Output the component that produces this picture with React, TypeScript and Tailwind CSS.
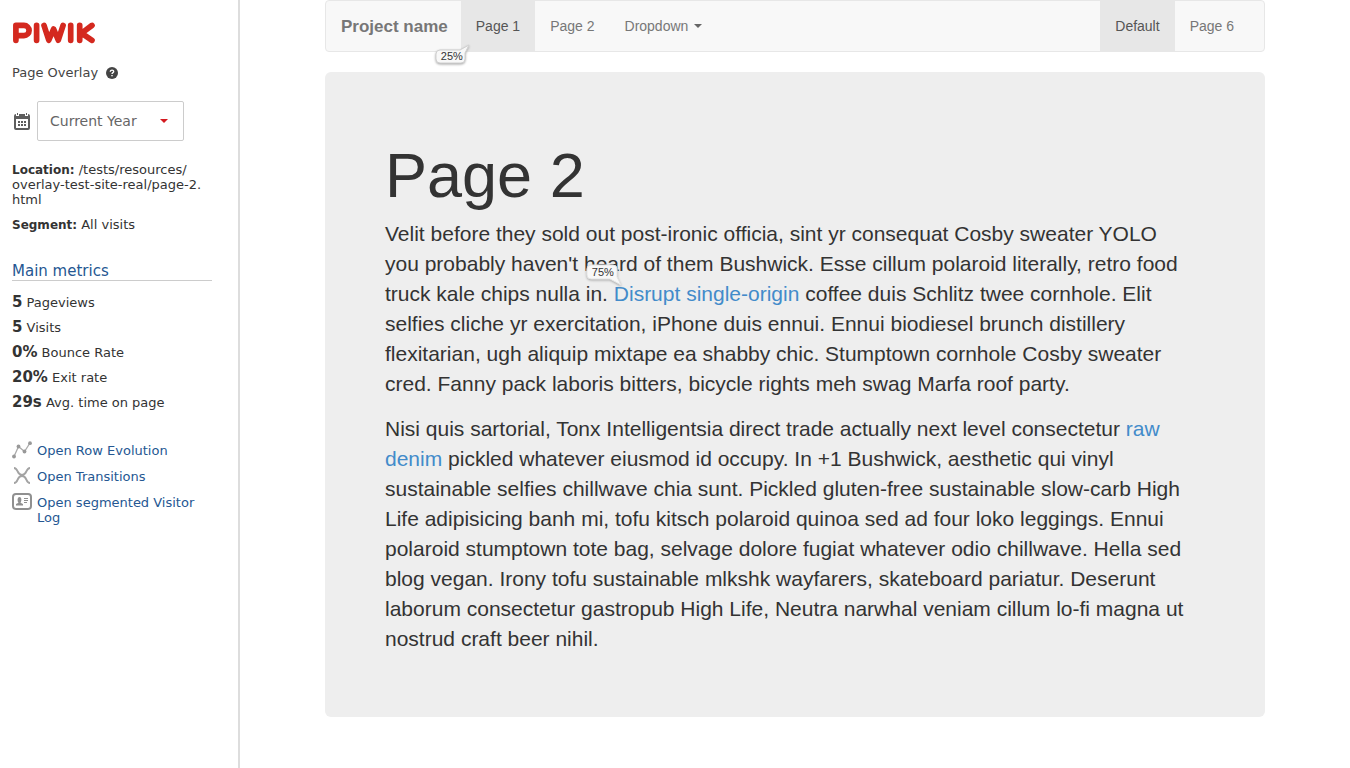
import React from "react";

const metrics = [
  ["5", "Pageviews"],
  ["5", "Visits"],
  ["0%", "Bounce Rate"],
  ["20%", "Exit rate"],
  ["29s", "Avg. time on page"],
];

function Logo() {
  return (
    <svg viewBox="0 0 84 22" className="h-[22px] w-[84px]" fill="none" stroke="#d4291f" strokeWidth="5.700" strokeLinecap="round" strokeLinejoin="round" role="img" aria-label="Piwik">
      <path d="M3.900 18.300V3.400H12a5 5 0 0 1 0 10.200H4M24.600 3.400v14.900M32 3.400l4.800 14.800L41.600 7l4.700 11.200 4.800-14.800M58.700 3.400v14.900M67.700 3.400v14.900M80 3.400l-10.500 7.800L80 18.300" />
    </svg>
  );
}

function HelpIcon() {
  return (
    <svg viewBox="0 0 12 12" className="size-3" aria-hidden="true">
      <circle cx="6" cy="6" r="6" fill="#444" />
      <path d="M4.300 4.700C4.300 2.600 7.800 2.700 7.700 4.600 7.600 5.700 6 5.600 6 7" fill="none" stroke="#fff" strokeWidth="1.300" />
      <path d="M5.300 8h1.400v1.300H5.300z" fill="#fff" />
    </svg>
  );
}

function CalendarIcon() {
  return (
    <svg viewBox="0 0 16 17" className="h-[17px] w-4" aria-hidden="true">
      <path fillRule="evenodd" fill="#5e5e5e" d="M2 1v2h3V1h6v2h3V1a2 2 0 0 1 2 2v12a2 2 0 0 1-2 2H2a2 2 0 0 1-2-2V3a2 2 0 0 1 2-2zM2 6v9h12V6z" />
      <path fill="#5e5e5e" d="M3 0h1v2H3zM12 0h1v2h-1zM7 8h2v2H7zM10 8h2v2h-2zM4 8h2v2H4zM4 11h2v2H4zM7 11h2v2H7zM10 11h2v2h-2z" />
    </svg>
  );
}

function EvolutionIcon() {
  return (
    <svg viewBox="0 0 20 18" className="h-[18px] w-5" aria-hidden="true">
      <path d="M2 15.500 6.500 5.500 12.500 10.500 18 2" fill="none" stroke="#aaa" strokeWidth="1.300" />
      <g fill="#999">
        <circle cx="2" cy="15.500" r="1.900" />
        <circle cx="6.500" cy="5.500" r="1.900" />
        <circle cx="12.500" cy="10.500" r="1.900" />
        <circle cx="18" cy="2.200" r="1.900" />
      </g>
    </svg>
  );
}

function TransitionsIcon() {
  return (
    <svg viewBox="0 0 20 18" className="h-[18px] w-5" fill="none" stroke="#a3a3a3" strokeWidth="1.900" aria-hidden="true">
      <path d="M2 1C6.500 1 4.500 8 10 8s3.500-7 8-7M2 16c4.500 0 2.500-7 8-7s3.500 7 8 7" />
    </svg>
  );
}

function VisitorIcon() {
  return (
    <svg viewBox="0 0 20 17" className="h-[17px] w-5" aria-hidden="true">
      <rect x="1" y="1" width="18" height="15" rx="3" fill="none" stroke="#909090" strokeWidth="2" />
      <path fill="#909090" d="M4 12.500v-1.500l2.500-1.200C5 7.500 5.500 4 7.500 4s2.500 3.500 1 5.800L11 11v1.500zM12 5h4v1h-4zM12 7h4v1h-4zM12 9h3v1h-3z" />
    </svg>
  );
}

const actions = [
  { label: "Open Row Evolution", Icon: EvolutionIcon },
  { label: "Open Transitions", Icon: TransitionsIcon },
  { label: "Open segmented Visitor Log", Icon: VisitorIcon },
];

function Sidebar() {
  return (
    <aside className="w-60 shrink-0 border-r-2 border-[#ddd] px-3 pt-[22px] font-['DejaVu_Sans',sans-serif] text-[13px] leading-[15px] text-[#333]">
      <Logo />
      <div className="mt-[21px] flex items-center gap-2 text-[#444]">
        Page Overlay <HelpIcon />
      </div>
      <div className="mt-[21px] flex items-center gap-[7px] pl-0.5">
        <CalendarIcon />
        <button className="flex h-10 w-[147px] items-center justify-between rounded-xs border border-[#ccc] pr-[15px] pl-3 text-[14px] text-[#666]">
          Current Year
          <svg viewBox="0 0 8 4" className="h-1 w-2" aria-hidden="true"><path d="M0 0h8L4 4z" fill="#d4191f" /></svg>
        </button>
      </div>
      <p className="mt-[21px] w-[200px]"><b className="text-[12px] leading-none">Location:</b> /tests/resources/<wbr />overlay-test-site-real/page-2.<wbr />html</p>
      <p className="mt-2.5"><b className="text-[12px] leading-none">Segment:</b> All visits</p>
      <h2 className="mt-[31px] w-[200px] border-b border-[#ccc] text-[15px] leading-[17px] text-[#255792]">Main metrics</h2>
      <ul className="mt-3.5 flex flex-col gap-2.5">
        {metrics.map(([v, label]) => (
          <li key={label}><b className="text-[15px] leading-none">{v}</b> {label}</li>
        ))}
      </ul>
      <ul className="mt-[33px] flex w-[200px] flex-col gap-[11px] text-[#255792]">
        {actions.map(({ label, Icon }) => (
          <li key={label}>
            <a href="#" className="flex items-start gap-[5px]"><span className="-mt-0.5 h-[15px] shrink-0"><Icon /></span><span>{label}</span></a>
          </li>
        ))}
      </ul>
    </aside>
  );
}

function Bubble({ value, below }: { value: string; below?: boolean }) {
  return (
    <span className={below ? "absolute -bottom-3.5 -left-[26px] h-5 w-9" : "absolute -top-[18px] -left-7 h-[22px] w-9"}>
      <svg viewBox="0 0 36 22" className="absolute inset-0 h-[22px] w-9 overflow-visible drop-shadow-[0_1px_1px_#aaa]" aria-hidden="true">
        <path
          d={below ? "M5 5h20L34 0l-4 8v6a4 4 0 0 1-4 4H5a4 4 0 0 1-4-4V9a4 4 0 0 1 4-4z" : "M5 1h22a4 4 0 0 1 4 4v8l4 8-11-6H5a4 4 0 0 1-4-4V5a4 4 0 0 1 4-4z"}
          fill="#f8f8f8" stroke={below ? "#d0d0d0" : "#e4e4e4"}
        />
      </svg>
      <span className={below ? "absolute top-1 left-1.5 text-[11px] leading-[14px] text-[#333]" : "absolute top-px left-1.5 text-[11px] leading-[14px] text-[#333]"}>{value}</span>
    </span>
  );
}

function Navbar() {
  return (
    <nav className="flex h-[52px] rounded border border-[#e7e7e7] bg-[#f8f8f8] pr-[15px] text-[14px] leading-5 text-[#777]">
      <a href="#" className="py-4 pr-[13px] pl-[15px] text-[17px] font-bold">Project name</a>
      <a href="#" className="relative bg-[#e7e7e7] px-[15px] py-[15px] text-[#555]">Page 1<Bubble value="25%" below /></a>
      <a href="#" className="px-[15px] py-[15px]">Page 2</a>
      <button className="flex items-center gap-1.5 px-[15px]">
        Dropdown <svg viewBox="0 0 8 4" className="h-1 w-2" aria-hidden="true"><path d="M0 0h8L4 4z" fill="#666" /></svg>
      </button>
      <a href="#" className="ml-auto bg-[#e7e7e7] px-[15px] py-[15px] text-[#555]">Default</a>
      <a href="#" className="px-[15px] py-[15px]">Page 6</a>
    </nav>
  );
}

export default function App() {
  return (
    <div className="flex min-h-screen bg-white">
      <Sidebar />
      <div className="min-w-0 flex-1 font-['Liberation_Sans',sans-serif]">
        <div className="mx-auto max-w-[940px]">
          <Navbar />
          <main className="mt-5 rounded-md bg-[#eee] pt-[69px] pr-[70px] pb-[63px] pl-[60px] text-[21px] leading-[30px] text-[#333]">
            <h1 className="text-[63px] leading-[69px]">Page 2</h1>
            <p className="mt-[9px]">
              Velit before they sold out post-ironic officia, sint yr consequat Cosby sweater YOLO you probably haven't heard of them Bushwick. Esse cillum polaroid literally, retro food truck kale chips nulla in.{" "}
              <a href="#" className="relative text-[#428bca]">Disrupt single-origin<Bubble value="75%" /></a> coffee duis Schlitz twee cornhole. Elit selfies cliche yr exercitation, iPhone duis ennui. Ennui biodiesel brunch distillery flexitarian, ugh aliquip mixtape ea shabby chic. Stumptown cornhole Cosby sweater cred. Fanny pack laboris bitters, bicycle rights meh swag Marfa roof party.
            </p>
            <p className="mt-[15px]">
              Nisi quis sartorial, Tonx Intelligentsia direct trade actually next level consectetur <a href="#" className="text-[#428bca]">raw denim</a> pickled whatever eiusmod id occupy. In +1 Bushwick, aesthetic qui vinyl sustainable selfies chillwave chia sunt. Pickled gluten-free sustainable slow-carb High Life adipisicing banh mi, tofu kitsch polaroid quinoa sed ad four loko leggings. Ennui polaroid stumptown tote bag, selvage dolore fugiat whatever odio chillwave. Hella sed blog vegan. Irony tofu sustainable mlkshk wayfarers, skateboard pariatur. Deserunt laborum consectetur gastropub High Life, Neutra narwhal veniam cillum lo-fi magna ut nostrud craft beer nihil.
            </p>
          </main>
        </div>
      </div>
    </div>
  );
}
